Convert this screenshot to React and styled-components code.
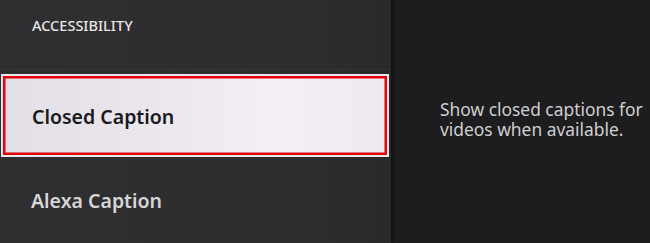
import React from "react";
import styled, { createGlobalStyle } from "styled-components";

const GlobalStyle = createGlobalStyle`
  html, body {
    margin: 0;
    padding: 0;
    background: #1c1b1d;
  }
  * {
    box-sizing: border-box;
  }
`;

const items = [
  { id: "cc", label: "Closed Caption" },
  { id: "alexa", label: "Alexa Caption" },
];

const App = () => {
  const selected = "cc";
  return (
    <>
      <GlobalStyle />
      <Screen>
        <Menu>
          <SectionTitle>ACCESSIBILITY</SectionTitle>
          <List>
            {items.map((item) => (
              <Item key={item.id} $active={item.id === selected}>
                <ItemLabel $active={item.id === selected}>{item.label}</ItemLabel>
              </Item>
            ))}
          </List>
        </Menu>
        <Detail>
          <Description>
            <Line>Show closed captions for</Line>
            <Line>videos when available.</Line>
          </Description>
        </Detail>
      </Screen>
    </>
  );
};

const Screen = styled.div`
  display: flex;
  width: 650px;
  height: 243px;
  overflow: hidden;
  font-family: "Noto Sans", "Open Sans", sans-serif;
`;

const Menu = styled.div`
  display: flex;
  flex-direction: column;
  width: 391px;
  flex-shrink: 0;
  background: linear-gradient(90deg, #2f2e31 0%, #2d2c2f 80%, #29282b 100%);
  box-shadow: 2px 0 3px rgba(0, 0, 0, 0.45);
  position: relative;
  z-index: 1;
`;

const SectionTitle = styled.div`
  height: 70px;
  padding: 15px 0 0 32px;
  font-size: 14.5px;
  font-weight: 500;
  color: #e6e6e6;
`;

const List = styled.div`
  display: flex;
  flex-direction: column;
  padding-top: 4px;
  border-top: 1px solid rgba(255, 255, 255, 0.04);
`;

const Item = styled.div`
  display: flex;
  align-items: center;
  height: ${(p) => (p.$active ? "83px" : "86px")};
  margin: ${(p) => (p.$active ? "0 2px 0 1px" : "0")};
  padding-left: 31px;
  background: ${(p) =>
    p.$active
      ? "linear-gradient(90deg, #e3dfe6 0%, #ece8ee 45%, #f3eff4 70%, #efe9f0 100%)"
      : "transparent"};
  box-shadow: ${(p) =>
    p.$active ? "inset 0 0 0 2px #ebe7ec, inset 0 0 0 4.5px #e0040b" : "none"};
`;

const ItemLabel = styled.span`
  font-size: 19.5px;
  font-weight: 600;
  color: ${(p) => (p.$active ? "#1a1a1c" : "#d6d6d6")};
  margin-top: ${(p) => (p.$active ? "2px" : "0")};
`;

const Detail = styled.div`
  flex: 1;
  display: flex;
  align-items: flex-start;
  padding: 99px 0 0 49px;
  background: #1d1c1e;
`;

const Description = styled.div`
  display: flex;
  flex-direction: column;
  gap: 0;
  font-size: 17.4px;
  line-height: 20px;
  color: #cfcfcf;
  white-space: nowrap;
`;

const Line = styled.span`
  display: block;
  height: 19.5px;
  overflow: visible;
`;

export default App;
